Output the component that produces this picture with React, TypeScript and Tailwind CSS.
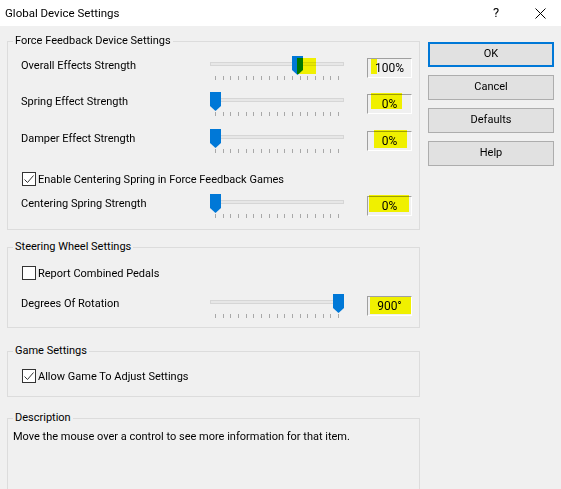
import type { ReactNode } from "react";

// a 0..1 slider position maps onto 123px of thumb travel
const TRAVEL = 123;

function Highlight({ className }: { className: string }) {
  return <span className={"absolute bg-[#ffff00] mix-blend-multiply " + className} />;
}

function Slider({ frac, mark }: { frac: number; mark?: ReactNode }) {
  return (
    <div className="relative h-[25px] w-[134px] shrink-0">
      <div className="absolute left-0 right-0 top-[6px] h-[4px] border border-[#d6d6d6] bg-[#e7e7e7]" />
      <div className="absolute left-[5px] right-[5px] top-[20px] flex justify-between">
        {Array.from({ length: 17 }, (_, i) => (
          <span key={i} className="h-[4px] w-px bg-[#a8a8a8]" />
        ))}
      </div>
      <svg
        className="absolute top-0"
        style={{ left: Math.round(frac * TRAVEL) }}
        width="11"
        height="19"
        viewBox="0 0 11 19"
      >
        <path d="M0 0H11V14L5.5 19L0 14Z" fill="#0078d7" />
      </svg>
      {mark}
    </div>
  );
}

function ValueBox({ value, mark }: { value: string; mark?: ReactNode }) {
  return (
    <div className="relative ml-[23px] mt-[2px] flex h-[20px] w-[45px] items-center justify-center border border-b-white border-l-[#a0a0a0] border-r-white border-t-[#a0a0a0] text-[12px]">
      {mark}
      <span className="relative">{value}</span>
    </div>
  );
}

function SliderRow({
  label,
  frac,
  value,
  sliderMark,
  boxMark,
  className = "",
}: {
  label: string;
  frac: number;
  value: string;
  sliderMark?: ReactNode;
  boxMark?: ReactNode;
  className?: string;
}) {
  return (
    <div className={"flex items-start " + className}>
      <span className="mt-[2px] w-[189px] leading-[16px]">{label}</span>
      <Slider frac={frac} mark={sliderMark} />
      <ValueBox value={value} mark={boxMark} />
    </div>
  );
}

function CheckRow({ label, checked, className = "" }: { label: string; checked: boolean; className?: string }) {
  return (
    <div className={"flex h-[16px] items-center " + className}>
      <span className="ml-[1px] flex h-[14px] w-[14px] items-center justify-center border border-[#333333] bg-white">
        {checked && (
          <svg width="12" height="12" viewBox="0 0 12 12">
            <path d="M1.5 6.5L4.5 9.5L10.5 2.5" fill="none" stroke="#333333" strokeWidth="1" />
          </svg>
        )}
      </span>
      <span className="ml-[2px] mt-[2px] leading-[16px]">{label}</span>
    </div>
  );
}

function Group({ title, className, children }: { title: string; className: string; children?: ReactNode }) {
  return (
    <div className={"relative border border-[#dcdcdc] " + className}>
      <span className="absolute -top-[9px] left-[5px] bg-[#f0f0f0] px-[2px] leading-[16px]">{title}</span>
      {children}
    </div>
  );
}

function DialogButton({ label, primary }: { label: string; primary?: boolean }) {
  return (
    <button
      className={
        primary
          ? "h-[25px] w-full border-2 border-[#0078d7] bg-[#e1e1e1]"
          : "h-[25px] w-full border border-[#adadad] bg-[#e1e1e1]"
      }
    >
      {label}
    </button>
  );
}

export default function App() {
  return (
    <div className="h-[489px] w-[561px] overflow-hidden bg-[#f0f0f0] font-['Roboto',sans-serif] text-[11px] text-black">
      {/* title bar */}
      <div className="flex h-[26px] items-center bg-white pl-[5px]">
        <span className="text-[11.5px] leading-[16px]">Global Device Settings</span>
        <span className="ml-auto w-[46px] text-center text-[13px]">?</span>
        <span className="flex w-[42px] justify-center">
          <svg width="11" height="11" viewBox="0 0 11 11">
            <path d="M0.5 0.5L10.5 10.5M10.5 0.5L0.5 10.5" stroke="#000" strokeWidth="1" />
          </svg>
        </span>
      </div>

      <div className="flex gap-[8px] pl-[7px] pt-[15px]">
        <div className="flex w-[413px] shrink-0 flex-col">
          <Group title="Force Feedback Device Settings" className="pb-[10px] pl-[13px] pr-[7px] pt-[14px]">
            <SliderRow
              label="Overall Effects Strength"
              frac={100 / 150}
              value="100%"
              sliderMark={<Highlight className="left-[87px] top-[2px] h-[16px] w-[19px]" />}
              boxMark={<Highlight className="left-[3px] top-0 h-[15px] w-[6px]" />}
            />
            <SliderRow
              label="Spring Effect Strength"
              frac={0}
              value="0%"
              className="mt-[11px]"
              boxMark={<Highlight className="-top-[2px] left-[3px] h-[16px] w-[31px]" />}
            />
            <SliderRow
              label="Damper Effect Strength"
              frac={0}
              value="0%"
              className="mt-[12px]"
              boxMark={<Highlight className="-top-[2px] left-[6px] h-[18px] w-[33px]" />}
            />
            <CheckRow label="Enable Centering Spring in Force Feedback Games" checked className="mt-[17px]" />
            <SliderRow
              label="Centering Spring Strength"
              frac={0}
              value="0%"
              className="mt-[7px]"
              boxMark={<Highlight className="-top-[2px] left-[1px] h-[17px] w-[40px]" />}
            />
          </Group>

          <Group title="Steering Wheel Settings" className="mt-[17px] pb-[8px] pl-[13px] pr-[7px] pt-[17px]">
            <CheckRow label="Report Combined Pedals" checked={false} />
            <SliderRow
              label="Degrees Of Rotation"
              frac={1}
              value="900°"
              className="mt-[13px]"
              boxMark={<Highlight className="left-[2px] top-0 h-[17px] w-[41px]" />}
            />
          </Group>

          <Group title="Game Settings" className="mt-[23px] pb-[12px] pl-[13px] pr-[7px] pt-[16px]">
            <CheckRow label="Allow Game To Adjust Settings" checked />
          </Group>

          <Group title="Description" className="mt-[21px] h-[120px] pl-[5px] pt-[10px]">
            <p className="leading-[16px]">Move the mouse over a control to see more information for that item.</p>
          </Group>
        </div>

        <div className="flex w-[126px] shrink-0 flex-col gap-[8px] pt-[1px]">
          <DialogButton label="OK" primary />
          <DialogButton label="Cancel" />
          <DialogButton label="Defaults" />
          <DialogButton label="Help" />
        </div>
      </div>
    </div>
  );
}
